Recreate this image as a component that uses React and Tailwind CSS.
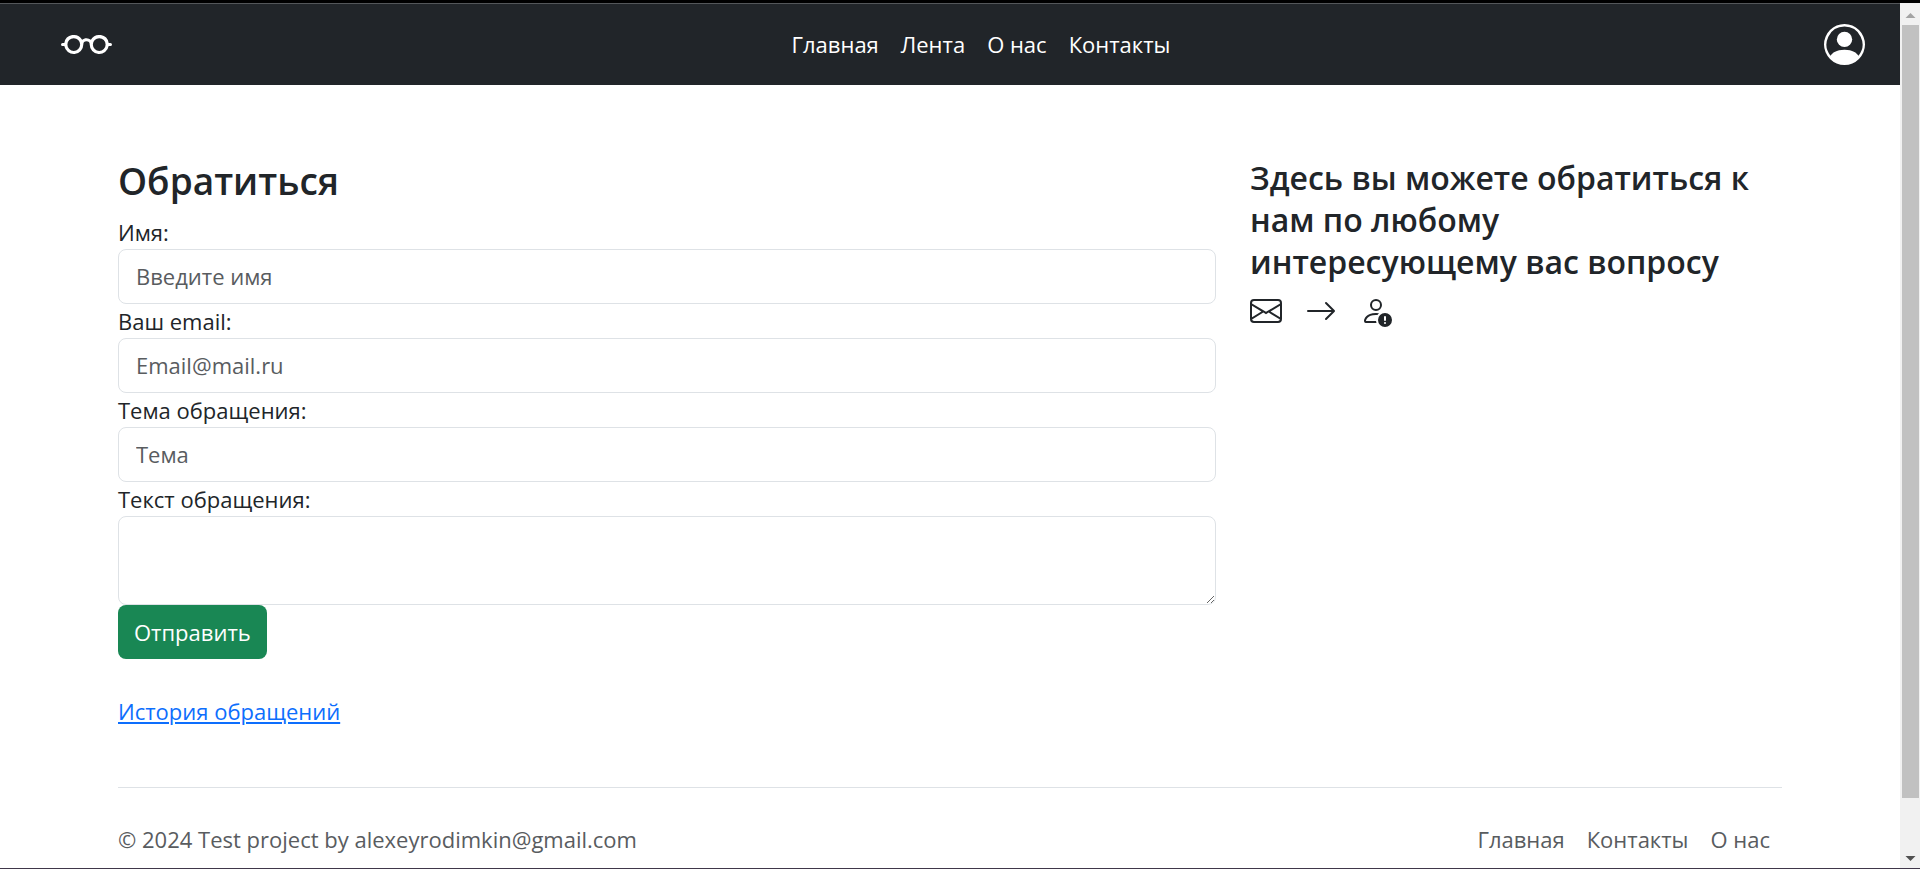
import {
  BsArrowRight,
  BsEnvelope,
  BsEyeglasses,
  BsPersonCircle,
  BsPersonExclamation,
} from "react-icons/bs";

const navLinks = ["Главная", "Лента", "О нас", "Контакты"];
const footerLinks = ["Главная", "Контакты", "О нас"];

const control =
  "block w-full rounded-lg border border-[#dee2e6] bg-white px-[17px] leading-[34px] text-[#212529] placeholder:text-[#595c5f] placeholder:opacity-100";

function Header() {
  return (
    <header className="grid h-[82px] grid-cols-[1fr_auto_1fr] items-center border-t border-[#54575a] bg-[#212529] pr-[35px] pl-[61px] text-white">
      <a href="#home" aria-label="На главную" className="justify-self-start">
        <BsEyeglasses className="size-[51px]" />
      </a>
      <nav className="flex gap-[22px] pb-[2px] pl-[36px]">
        {navLinks.map((label) => (
          <a key={label} href="#nav">
            {label}
          </a>
        ))}
      </nav>
      <a href="#profile" aria-label="Профиль" className="justify-self-end">
        <BsPersonCircle className="size-[41px]" />
      </a>
    </header>
  );
}

function Field({ id, label, type = "text", placeholder }) {
  return (
    <div>
      <label htmlFor={id} className="block">
        {label}
      </label>
      <input id={id} type={type} placeholder={placeholder} className={`${control} h-[55px] pb-[2px]`} />
    </div>
  );
}

function ContactForm() {
  return (
    <form className="col-span-2" onSubmit={(e) => e.preventDefault()}>
      <h2 className="mb-[10px] text-[37px] leading-[48px] font-semibold">Обратиться</h2>
      <Field id="name" label="Имя:" placeholder="Введите имя" />
      <Field id="email" label="Ваш email:" type="email" placeholder="Email@mail.ru" />
      <Field id="subject" label="Тема обращения:" placeholder="Тема" />
      <label htmlFor="message" className="block">
        Текст обращения:
      </label>
      <textarea id="message" rows={2} className={`${control} h-[89px] resize-y py-2`} />
      <button type="submit" className="block h-[54px] rounded-lg bg-[#198754] px-4 text-white">
        Отправить
      </button>
      <a
        href="#history"
        className="mt-[35px] inline-block text-[#0d6efd] underline decoration-2 underline-offset-2"
      >
        История обращений
      </a>
    </form>
  );
}

function Aside() {
  return (
    <aside className="pr-4">
      <h3 className="mb-3 text-[32px] leading-[42px] font-semibold">
        Здесь вы можете обратиться к нам по любому интересующему вас вопросу
      </h3>
      <div className="flex gap-[23px]">
        <BsEnvelope className="size-8" />
        <BsArrowRight className="size-8" />
        <BsPersonExclamation className="size-8" />
      </div>
    </aside>
  );
}

function Footer() {
  return (
    <footer className="mt-[59px] flex items-center justify-between border-t border-[#dee2e6] pt-[34px] text-[#595c5f]">
      <p>© 2024 Test project by alexeyrodimkin@gmail.com</p>
      <nav className="flex gap-[22px] pr-3">
        {footerLinks.map((label) => (
          <a key={label} href="#footer">
            {label}
          </a>
        ))}
      </nav>
    </footer>
  );
}

function ScrollTrack() {
  return (
    <div aria-hidden="true" className="flex w-5 shrink-0 flex-col items-end bg-[#f1f1f1] pr-px">
      <svg viewBox="2 0 17 22" className="h-[22px] w-[17px]">
        <path d="M5.500 15 L10.500 10 L15.500 15 Z" fill="#a3a3a3" />
      </svg>
      <div className="w-[17px] grow bg-[#c1c1c1]" />
      <div className="h-12" />
      <svg viewBox="2 0 17 22" className="h-[22px] w-[17px]">
        <path d="M5.500 10 L10.500 15 L15.500 10 Z" fill="#505050" />
      </svg>
    </div>
  );
}

export default function App() {
  return (
    <div className="flex min-h-screen flex-col border-t-3 border-b border-t-black border-b-[#40374a] bg-white font-['Open_Sans','Noto_Sans',sans-serif] text-[22px] leading-[34px] text-[#212529]">
      <div className="flex grow">
        <div className="min-w-0 grow">
          <Header />
          <div className="px-[118px] pt-[72px]">
            <main className="grid grid-cols-3 gap-x-[34px]">
              <ContactForm />
              <Aside />
            </main>
            <Footer />
          </div>
        </div>
        <ScrollTrack />
      </div>
    </div>
  );
}
